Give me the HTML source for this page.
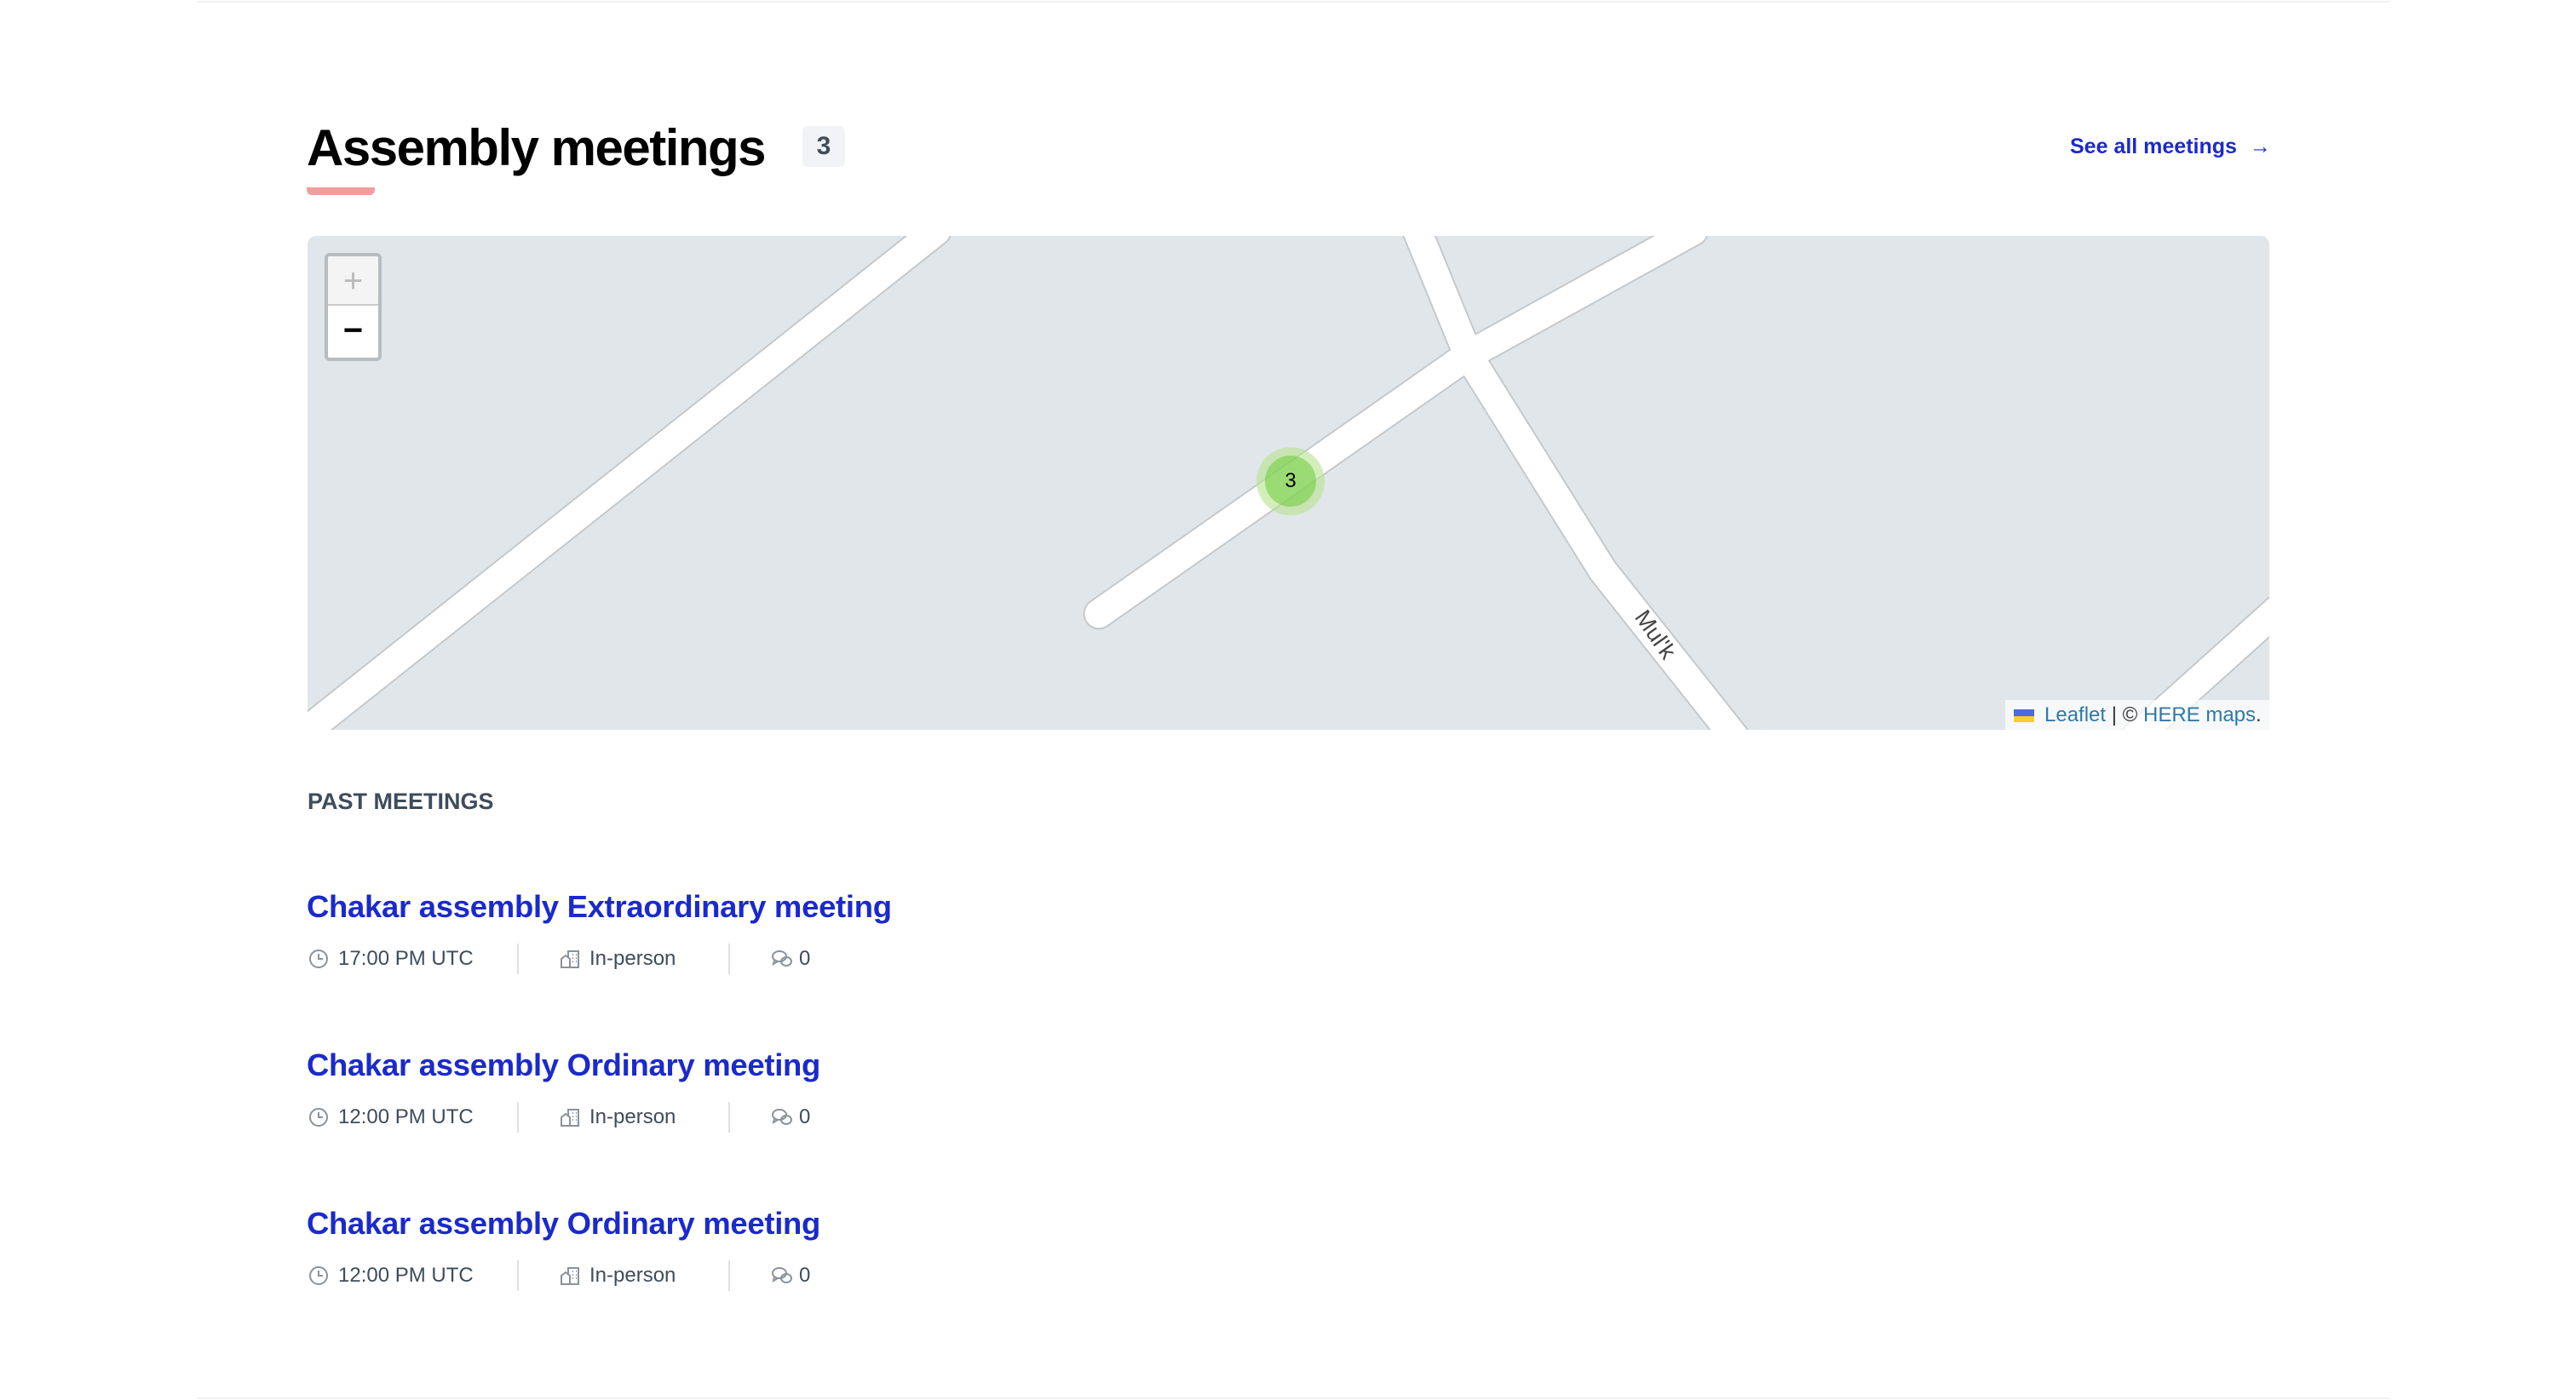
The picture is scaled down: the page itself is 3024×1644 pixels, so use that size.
<!DOCTYPE html>
<html><head><meta charset="utf-8"><style>
*{margin:0;padding:0;box-sizing:border-box}
body{width:3024px;height:1644px;background:#fff;font-family:"Liberation Sans",sans-serif;position:relative;overflow:hidden}
.abs{position:absolute}
h1{position:absolute;left:360px;top:134px;font-size:60px;font-weight:bold;color:#000;letter-spacing:-1.5px;line-height:80px}
.bar{left:360px;top:220px;width:80px;height:9px;background:#f19d9d;border-radius:0 0 6px 6px}
.badge{left:942px;top:148px;width:50px;height:48px;background:#f2f3f6;border-radius:6px;color:#3e4c5c;font-weight:bold;font-size:30px;text-align:center;line-height:48px}
.see{left:2430px;top:158px;font-size:25px;font-weight:bold;color:#1a2acc;white-space:nowrap}
.map{left:361px;top:277px;width:2303px;height:580px;background:#e1e6ea;border-radius:10px 10px 0 0;overflow:hidden}
.zoom{left:381px;top:297px;width:67px;height:127px;border:4px solid #b8bcbf;border-radius:6px;background:#fff;overflow:hidden}
.zoom div{height:58px;text-align:center;font-size:40px;line-height:58px}
.attr{left:2354px;top:822px;width:310px;height:35px;background:rgba(255,255,255,.7);font-size:24px;line-height:35px;color:#333;padding-left:46px;white-space:nowrap}
.attr a{color:#2e7aa8;text-decoration:none}
.past{left:361px;top:926px;font-size:27px;font-weight:bold;color:#3e4c5c}
.t{left:360px;font-size:36.5px;font-weight:bold;color:#1a2acc;letter-spacing:-0.3px}
.m{left:362px;font-size:24px;color:#3e4c5c;height:36px;line-height:36px}
.m span{position:absolute;white-space:nowrap}
.sep{position:absolute;top:0;width:2px;height:36px;background:#dde1e6}
.line{height:2px;background:#eef0f2;left:232px;width:2574px}
</style></head><body>
<div class="abs line" style="top:1px"></div>
<div class="abs line" style="top:1641px"></div>
<h1>Assembly meetings</h1>
<div class="abs bar"></div>
<div class="abs badge">3</div>
<div class="abs see">See all meetings <span style="font-weight:normal;margin-left:8px">→</span></div>
<div class="abs map">
<svg width="2303" height="580" viewBox="186 143 1195 298" preserveAspectRatio="none" style="position:absolute;left:0;top:0">
<g fill="none" stroke-linecap="round">
<g stroke="#c4c8cb" stroke-width="19">
<line x1="190" y1="438" x2="569" y2="140"/>
<polyline points="668,371 893,215 1030,140"/>
<polyline points="862,140 893,215 975,345 1055,445"/>
<line x1="1300" y1="445" x2="1390" y2="365"/>
</g>
<g stroke="#fff" stroke-width="17">
<line x1="190" y1="438" x2="569" y2="140"/>
<polyline points="668,371 893,215 1030,140"/>
<polyline points="862,140 893,215 975,345 1055,445"/>
<line x1="1300" y1="445" x2="1390" y2="365"/>
</g></g>
<text x="0" y="0" transform="translate(994,373) rotate(55)" font-size="14" fill="#444" font-family="Liberation Sans">Mul'k</text>
</svg>
<div class="abs" style="left:1114px;top:248px;width:80px;height:80px;border-radius:50%;background:rgba(181,226,140,.6)"></div>
<div class="abs" style="left:1124px;top:258px;width:60px;height:60px;border-radius:50%;background:rgba(110,204,57,.55);text-align:center;line-height:60px;font-size:24px;color:#000">3</div>
</div>
<div class="abs zoom"><div style="background:#f4f4f4;color:#bbb;border-bottom:2px solid #ccc">+</div><div style="color:#000;font-weight:bold">−</div></div>
<div class="abs attr"><span class="abs" style="left:10px;top:11px;width:24px;height:8px;background:#4d6bd7"></span><span class="abs" style="left:10px;top:19px;width:24px;height:7px;background:#f5d02f"></span><a>Leaflet</a> | © <a>HERE maps</a>.</div>
<div class="abs past">PAST MEETINGS</div>

<div class="abs t" style="top:1044px">Chakar assembly Extraordinary meeting</div>
<div class="abs t" style="top:1230px">Chakar assembly Ordinary meeting</div>
<div class="abs t" style="top:1416px">Chakar assembly Ordinary meeting</div>

<div class="abs m" style="top:1108px">
<svg class="abs" style="left:0;top:6px" width="24" height="24" viewBox="0 0 24 24" fill="none" stroke="#8a929b" stroke-width="2"><circle cx="12" cy="12" r="10"/><path d="M12 6v6h5"/></svg>
<span style="left:35px">17:00 PM UTC</span><div class="sep" style="left:245px"></div>
<svg class="abs" style="left:295px;top:6px" width="24" height="24" viewBox="0 0 24 24" fill="none" stroke="#8a929b" stroke-width="2"><path d="M2 22V12l5-4 5 4v10zM10 10V3h12v19H12M15 7h1M19 7h1M15 11h1M19 11h1M15 15h1M19 15h1"/></svg>
<span style="left:330px">In-person</span><div class="sep" style="left:493px"></div>
<svg class="abs" style="left:543px;top:6px" width="26" height="24" viewBox="0 0 26 24" fill="none" stroke="#8a929b" stroke-width="2"><ellipse cx="10" cy="9" rx="8" ry="6"/><path d="M4 14l-1 4 5-3"/><ellipse cx="18" cy="15" rx="6" ry="5"/></svg>
<span style="left:576px">0</span></div>

<div class="abs m" style="top:1294px">
<svg class="abs" style="left:0;top:6px" width="24" height="24" viewBox="0 0 24 24" fill="none" stroke="#8a929b" stroke-width="2"><circle cx="12" cy="12" r="10"/><path d="M12 6v6h5"/></svg>
<span style="left:35px">12:00 PM UTC</span><div class="sep" style="left:245px"></div>
<svg class="abs" style="left:295px;top:6px" width="24" height="24" viewBox="0 0 24 24" fill="none" stroke="#8a929b" stroke-width="2"><path d="M2 22V12l5-4 5 4v10zM10 10V3h12v19H12M15 7h1M19 7h1M15 11h1M19 11h1M15 15h1M19 15h1"/></svg>
<span style="left:330px">In-person</span><div class="sep" style="left:493px"></div>
<svg class="abs" style="left:543px;top:6px" width="26" height="24" viewBox="0 0 26 24" fill="none" stroke="#8a929b" stroke-width="2"><ellipse cx="10" cy="9" rx="8" ry="6"/><path d="M4 14l-1 4 5-3"/><ellipse cx="18" cy="15" rx="6" ry="5"/></svg>
<span style="left:576px">0</span></div>

<div class="abs m" style="top:1480px">
<svg class="abs" style="left:0;top:6px" width="24" height="24" viewBox="0 0 24 24" fill="none" stroke="#8a929b" stroke-width="2"><circle cx="12" cy="12" r="10"/><path d="M12 6v6h5"/></svg>
<span style="left:35px">12:00 PM UTC</span><div class="sep" style="left:245px"></div>
<svg class="abs" style="left:295px;top:6px" width="24" height="24" viewBox="0 0 24 24" fill="none" stroke="#8a929b" stroke-width="2"><path d="M2 22V12l5-4 5 4v10zM10 10V3h12v19H12M15 7h1M19 7h1M15 11h1M19 11h1M15 15h1M19 15h1"/></svg>
<span style="left:330px">In-person</span><div class="sep" style="left:493px"></div>
<svg class="abs" style="left:543px;top:6px" width="26" height="24" viewBox="0 0 26 24" fill="none" stroke="#8a929b" stroke-width="2"><ellipse cx="10" cy="9" rx="8" ry="6"/><path d="M4 14l-1 4 5-3"/><ellipse cx="18" cy="15" rx="6" ry="5"/></svg>
<span style="left:576px">0</span></div>
</body></html>
